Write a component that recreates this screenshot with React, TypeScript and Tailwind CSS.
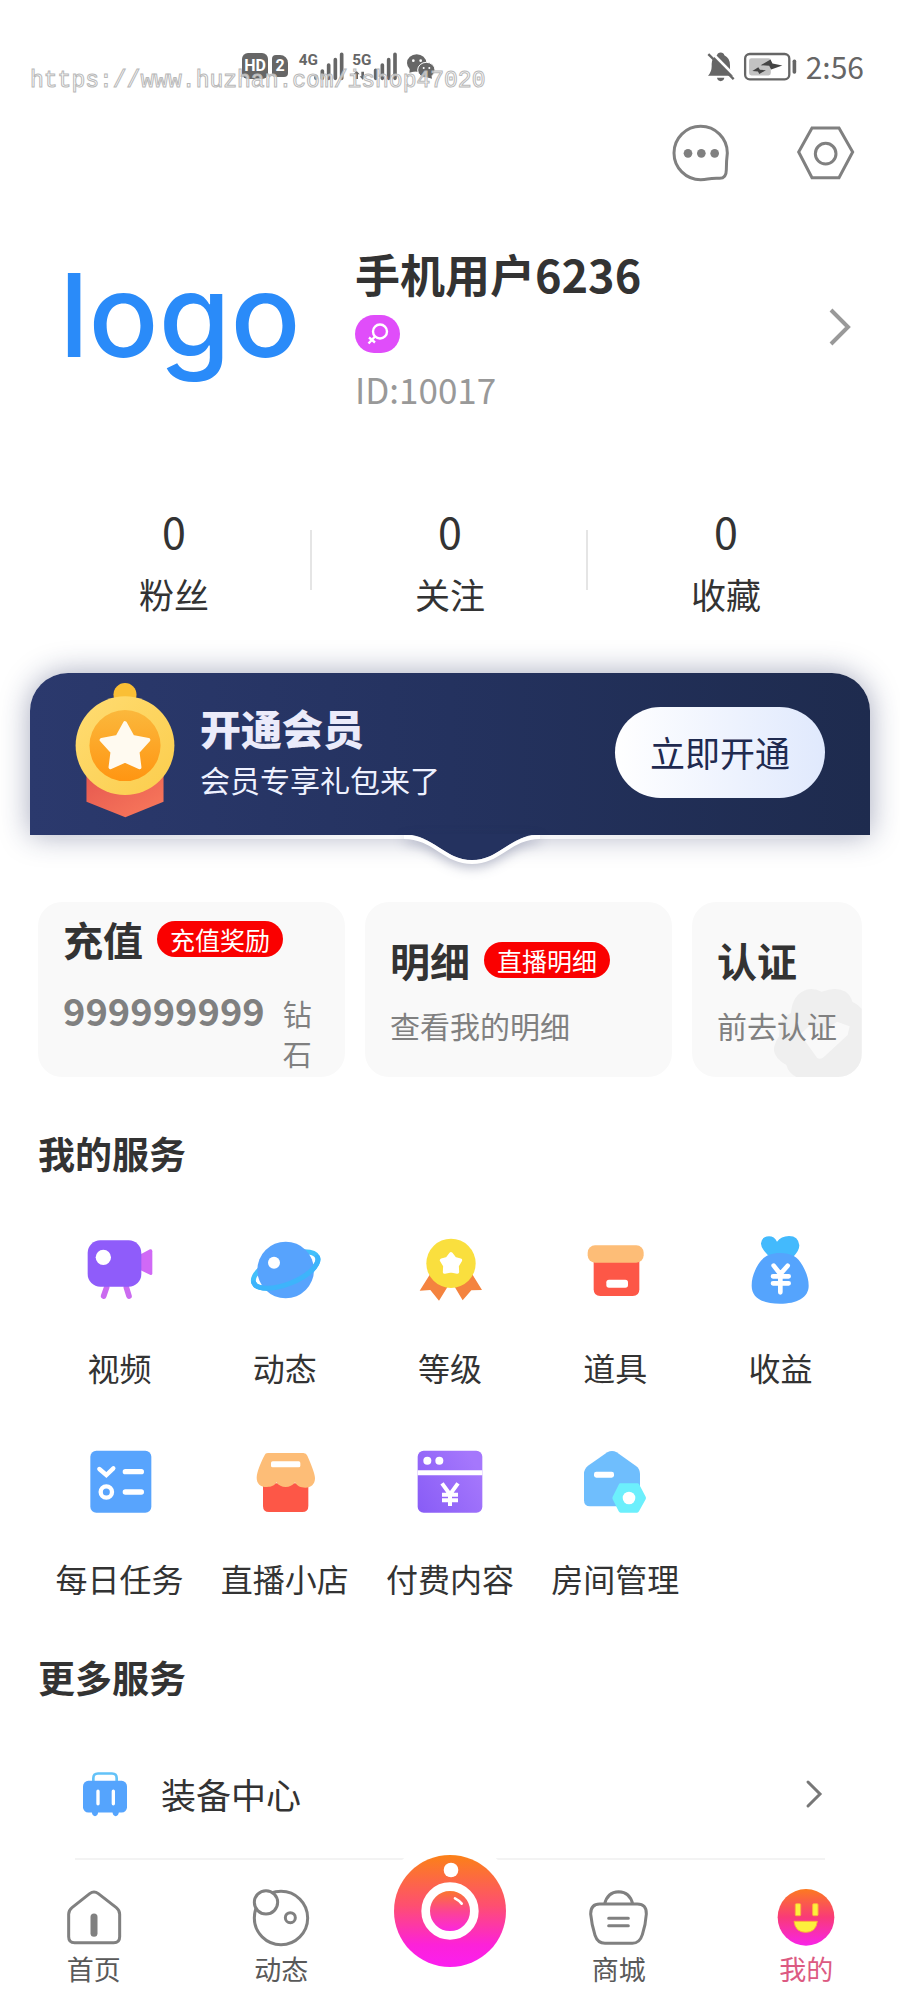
import type { ReactNode } from "react";

const services: { label: string; icon: ReactNode }[] = [
  { label: "视频", icon: <VideoIcon /> },
  { label: "动态", icon: <PlanetIcon /> },
  { label: "等级", icon: <LevelIcon /> },
  { label: "道具", icon: <PropsIcon /> },
  { label: "收益", icon: <IncomeIcon /> },
  { label: "每日任务", icon: <TaskIcon /> },
  { label: "直播小店", icon: <ShopIcon /> },
  { label: "付费内容", icon: <PaidIcon /> },
  { label: "房间管理", icon: <RoomIcon /> },
];

const stats = [
  { label: "粉丝", value: 0 },
  { label: "关注", value: 0 },
  { label: "收藏", value: 0 },
];

function VideoIcon() {
  return (
    <svg viewBox="90 90 240 240" className="size-20">
      <path d="M170 262l-9 26M229 262l8 26" stroke="#cb6bf0" strokeWidth="17" strokeLinecap="round" />
      <path d="M272 163l28-15q7-2 7 6v66q0 7-7 4l-28-13z" fill="#d069f6" />
      <rect x="113" y="121" width="161" height="139" rx="38" fill="#8f5cfa" />
      <circle cx="160" cy="172" r="23" fill="#fff" />
    </svg>
  );
}

function PlanetIcon() {
  return (
    <svg viewBox="585 90 240 240" className="size-20" fill="none">
      <ellipse cx="707" cy="210" rx="103" ry="42" stroke="#43c0fb" strokeWidth="15" transform="rotate(-22 707 210)" />
      <circle cx="707" cy="210" r="85" fill="#57a3fd" />
      <path
        d="M604 210a103 42 0 0 0 206 0"
        stroke="#3db4fb"
        strokeWidth="15"
        strokeLinecap="round"
        transform="rotate(-22 707 210)"
      />
      <circle cx="672" cy="188" r="18" fill="#fff" />
    </svg>
  );
}

function LevelIcon() {
  return (
    <svg viewBox="1080 90 240 240" className="size-20">
      <path d="M1142 220l-33 52 32-2 26 32 36-58zM1265 220l31 50-32 1-26 30-34-57z" fill="#f4833f" />
      <circle cx="1203" cy="190" r="74" fill="#fadf3e" />
      <path
        d="M1203 162l11 14 17 5-10 16 1 19-19-4-19 4 1-19-10-16 17-5z"
        fill="#fff"
        stroke="#fff"
        strokeWidth="11"
        strokeLinejoin="round"
      />
    </svg>
  );
}

function PropsIcon() {
  return (
    <svg viewBox="405 90 240 240" className="size-20">
      <path d="M461 180h137v88q0 20-20 20h-97q-20 0-20-20z" fill="#fd5747" />
      <rect x="443" y="136" width="168" height="52" rx="22" fill="#fdbd77" />
      <rect x="499" y="239" width="65" height="24" rx="8" fill="#fff" />
    </svg>
  );
}

function IncomeIcon() {
  return (
    <svg viewBox="900 90 240 240" className="size-20" fill="none">
      <path
        d="M984 166q-22-22-21-36 2-20 24-21 16 0 24 16 12-16 36-17 28 0 31 28 0 16-18 34z"
        fill="#43bafd"
      />
      <path
        d="M1020 159c34 0 54 12 68 38 12 22 18 40 18 60 0 36-36 54-86 54s-85-16-85-54c0-24 8-44 20-64 14-22 32-34 65-34z"
        fill="#55a4fd"
      />
      <path
        d="M1001 197l20 25 22-25M1021 222v55M999 229h47M999 250h47"
        stroke="#fff"
        strokeWidth="14"
        strokeLinecap="round"
      />
    </svg>
  );
}

function TaskIcon() {
  return (
    <svg viewBox="90 723 240 240" className="size-20" fill="none">
      <rect x="121" y="752" width="183" height="186" rx="18" fill="#58a4fd" />
      <path d="M148 807l21 18 21-20" stroke="#fff" strokeWidth="13" strokeLinecap="round" />
      <path d="M226 815h48M226 876h48" stroke="#fff" strokeWidth="16" strokeLinecap="round" />
      <circle cx="169" cy="876" r="17" stroke="#fff" strokeWidth="13" />
    </svg>
  );
}

function ShopIcon() {
  return (
    <svg viewBox="585 723 240 240" className="size-20">
      <path d="M639 850h136v68q0 18-18 18H657q-18 0-18-18z" fill="#fd5747" />
      <path
        d="M654 759h106q9 0 12 8 23 52 23 68c0 18-12 28-29 28-14 0-24-4-31-16-8 10-16 14-28 14s-20-4-28-14c-6 10-14 14-28 14-20 0-31-10-31-28 0-16 14-50 23-66 3-6 5-8 11-8z"
        fill="#fdbd77"
      />
      <rect x="663" y="784" width="88" height="18" rx="5" fill="#fff" />
    </svg>
  );
}

function PaidIcon() {
  return (
    <svg viewBox="1080 723 240 240" className="size-20" fill="none">
      <defs>
        <linearGradient id="paid" x1="0" y1="1" x2="1" y2="0.4">
          <stop offset="0" stopColor="#885cf6" />
          <stop offset="1" stopColor="#a577fc" />
        </linearGradient>
      </defs>
      <rect x="1103" y="752" width="194" height="186" rx="18" fill="url(#paid)" />
      <path d="M1103 818h194" stroke="#fff" strokeWidth="15" />
      <circle cx="1132" cy="782" r="12" fill="#fff" />
      <circle cx="1168" cy="782" r="12" fill="#fff" />
      <path d="M1176 850l24 33 24-33M1200 881v37M1176 884h48M1176 901h48" stroke="#fff" strokeWidth="12" />
    </svg>
  );
}

function RoomIcon() {
  return (
    <svg viewBox="405 723 240 240" className="size-20">
      <path
        d="M502 757q14-8 28 0l58 41q12 9 12 23v80q0 18-18 18H450q-18 0-18-18v-80q0-14 12-24z"
        fill="#6fbefd"
      />
      <rect x="462" y="815" width="60" height="18" rx="7" fill="#fff" />
      <path
        d="M541 850h51q4 0 6 4l19 36q2 4 0 8l-20 36q-2 4-6 4h-49q-4 0-6-4l-18-36q-2-4 0-8l18-36q2-4 5-4z"
        fill="#6ceffc"
      />
      <circle cx="567" cy="894" r="19" fill="#fff" />
    </svg>
  );
}

function Medal() {
  return (
    <svg viewBox="225 95 300 410" className="mb-1 h-[135px] w-[100px] shrink-0">
      <defs>
        <linearGradient id="ribbon" x1="0" y1="0" x2="1" y2="1">
          <stop offset="0" stopColor="#e5574f" />
          <stop offset="1" stopColor="#f97a5c" />
        </linearGradient>
        <linearGradient id="rim" x1="0" y1="0" x2="1" y2="1">
          <stop offset="0" stopColor="#ffdc72" />
          <stop offset="1" stopColor="#fbcd4c" />
        </linearGradient>
        <linearGradient id="core" x1="0" y1="0" x2="0" y2="1">
          <stop offset="0" stopColor="#fbb83c" />
          <stop offset="1" stopColor="#ff9512" />
        </linearGradient>
      </defs>
      <path d="M258 360h234v96l-116 47-118-47z" fill="url(#ribbon)" />
      <circle cx="375" cy="130" r="35" fill="#fabf35" />
      <circle cx="375" cy="285" r="150" fill="url(#rim)" />
      <circle cx="375" cy="285" r="108" fill="url(#core)" />
      <path
        d="M375 217l23 42 48 9-33 36 6 47-44-20-44 20 6-47-33-36 48-9z"
        fill="#fffaf0"
        stroke="#fffaf0"
        strokeWidth="12"
        strokeLinejoin="round"
      />
    </svg>
  );
}

function StatusBar() {
  return (
    <div className="relative flex h-[120px] items-center pt-3 pr-9 pl-[242px] text-[#666]">
      <span className="flex size-[26px] items-center justify-center rounded-md bg-[#666] font-['Roboto',sans-serif] text-base font-bold text-white">
        HD
      </span>
      <span className="ml-1 flex h-[22px] w-4 items-center justify-center rounded-sm rounded-tr-lg bg-[#666] font-['Roboto',sans-serif] text-base font-bold text-white">
        2
      </span>
      <svg viewBox="896 62 144 90" className="ml-[10px] h-[30px] w-12" fill="currentColor">
        <text x="898" y="104" fontFamily="Roboto, sans-serif" fontWeight="700" fontSize="46">
          4G
        </text>
        <path
          d="M950 139v5M969 122v22M988 104v40M1008 88v56M1027 72v72"
          stroke="currentColor"
          strokeWidth="11"
          strokeLinecap="round"
        />
      </svg>
      <svg viewBox="1060 62 144 90" className="ml-[6px] h-[30px] w-12" fill="currentColor">
        <text x="1061" y="104" fontFamily="Roboto, sans-serif" fontWeight="700" fontSize="46">
          5G
        </text>
        <path
          d="M1131 120v24M1151 104v40M1170 88v56M1189 72v72"
          stroke="currentColor"
          strokeWidth="11"
          strokeLinecap="round"
        />
        <path d="M1064 132l10-10 9 10h-5v14h-8v-14zM1102 138l-10 10-9-10h5v-14h8v14z" />
      </svg>
      <svg viewBox="1222 66 90 84" className="ml-[6px] h-7 w-[30px]" fill="currentColor">
        <path d="M1232 128l2-14 16 10z" />
        <ellipse cx="1254" cy="99" rx="29" ry="26" />
        <ellipse cx="1283" cy="120" rx="26" ry="23" stroke="#fff" strokeWidth="3" />
        <path d="M1300 146l-2-12-14 8z" />
        <g fill="#fff">
          <circle cx="1244" cy="92" r="4" />
          <circle cx="1266" cy="92" r="4" />
          <circle cx="1275" cy="114" r="3" />
          <circle cx="1292" cy="114" r="3" />
        </g>
      </svg>
      <svg viewBox="318 62 84 92" className="ml-auto h-[31px] w-7" fill="currentColor">
        <path d="M348 74q2-8 11-8t11 8q17 8 17 30v10q0 12 11 22H321q11-12 11-28v-8q0-18 16-26z" />
        <path d="M348 142h22q-2 10-11 10t-11-10z" />
        <path d="M331 65l74 75" stroke="#fff" strokeWidth="8" />
        <path d="M322 71l76 75" stroke="currentColor" strokeWidth="7" />
      </svg>
      <svg viewBox="428 64 164 88" className="ml-2 h-[29px] w-[55px]" fill="none">
        <rect x="433" y="70" width="134" height="77" rx="14" stroke="#666" strokeWidth="7" />
        <rect x="445" y="83" width="66" height="52" rx="7" fill="#c2c2c2" />
        <rect x="577" y="87" width="11" height="43" rx="5" fill="#666" />
        <path d="M480 104l30-17 6 12 30 6-34 12-6-11zM455 122l18-12 5 8 18 1-20 12-4-8z" fill="#444" />
      </svg>
      <time className="ml-2 text-[30px] leading-9">2:56</time>
      <span className="pointer-events-none absolute top-[67px] left-[30px] font-['Liberation_Mono',monospace] text-[23px] leading-7 text-white/70 [-webkit-text-stroke:1px_#b8b8b8]">
        https://www.huzhan.com/ishop47020
      </span>
    </div>
  );
}

function Profile() {
  return (
    <section className="flex items-center pt-[55px] pr-11 pl-[50px]">
      <div className="w-[305px] pr-[45px] pb-6 text-center font-['Inter',sans-serif] text-[116px] leading-[144px] font-medium text-[#2a8bf9]">
        logo
      </div>
      <div>
        <h1 className="text-[45px] leading-[62px] font-bold text-[#333]">手机用户6236</h1>
        <span className="mt-[10px] flex h-[38px] w-[45px] items-center justify-center rounded-full bg-[#e04dfa]">
          <svg viewBox="0 0 22 22" className="size-[22px]" fill="none" stroke="#fff" strokeWidth="2.4">
            <circle cx="13" cy="8.5" r="7" />
            <path d="M8 13.5l-6.500 7M2 14.500l6 5" strokeWidth="2.4" />
          </svg>
        </span>
        <p className="mt-[14px] text-[35px] leading-[44px] text-[#999]">ID:10017</p>
      </div>
      <button type="button" aria-label="个人资料" className="ml-auto p-1">
        <svg viewBox="0 0 24 40" className="h-10 w-6" fill="none" stroke="#999" strokeWidth="4">
          <path d="M3 3l17 17L3 37" />
        </svg>
      </button>
    </section>
  );
}

function Stats() {
  return (
    <section className="mt-[91px] flex items-center px-9">
      {stats.map((s, i) => (
        <div key={s.label} className="flex flex-1 items-center">
          {i > 0 && <span className="-ml-0.5 h-[60px] w-0.5 bg-[#e5e5e5]" />}
          <div className="flex-1 text-center text-[#333]">
            <p className="text-[43px] leading-14">{s.value}</p>
            <p className="mt-3 text-[35px] leading-12">{s.label}</p>
          </div>
        </div>
      ))}
    </section>
  );
}

function VipBanner() {
  return (
    <section className="relative mx-[30px] mt-[55px] flex h-[162px] items-center rounded-t-[38px] bg-linear-to-r from-[#2b396d] via-[#24325f] to-[#1e2b4e] pr-[45px] pb-1 pl-[45px] shadow-[0_0_30px_rgba(30,40,90,0.4)]">
      <Medal />
      <div className="ml-[25px]">
        <h2 className="text-[41px] leading-[50px] font-black text-[#ebebfa]">开通会员</h2>
        <p className="mt-1 text-[30px] leading-[46px] text-[#eef1ff]">会员专享礼包来了</p>
      </div>
      <button
        type="button"
        className="ml-auto h-[91px] w-[210px] rounded-full bg-linear-to-r from-white to-[#e0e9fd] text-[35px] text-[#1f2a50]"
      >
        立即开通
      </button>
      <span className="absolute inset-x-0 top-full h-1 bg-linear-to-r from-transparent via-white to-transparent" />
      <svg
        viewBox="0 0 136 32"
        className="absolute top-[161px] left-[54%] -ml-20 h-8 w-[136px] overflow-visible drop-shadow-[0_4px_6px_rgba(30,40,90,0.3)]"
      >
        <path d="M0 0C30 1 40 26 68 26S106 1 136 0z" fill="#24325f" />
        <path d="M0 3C30 3 40 28 68 28S106 3 136 3" fill="none" stroke="#fff" strokeWidth="4" />
      </svg>
    </section>
  );
}

function Badge({ children }: { children: ReactNode }) {
  return (
    <span className="ml-[14px] shrink-0 rounded-full bg-[#fa0000] px-[13px] text-[25px] leading-9 whitespace-nowrap text-white">
      {children}
    </span>
  );
}

function Cards() {
  return (
    <section className="mt-[67px] grid h-[175px] grid-cols-[307fr_307fr_170fr] gap-5 px-[38px]">
      <a href="#recharge" className="flex flex-col rounded-3xl bg-[#f9f9f9] pt-[10px] pl-[25px]">
        <div className="flex items-center">
          <h3 className="text-[40px] leading-[54px] font-bold text-[#333]">充值</h3>
          <Badge>充值奖励</Badge>
        </div>
        <div className="mt-6 flex items-baseline text-[#808080]">
          <span className="text-[38px] leading-10 font-bold">999999999</span>
          <span className="ml-[18px] w-[29px] text-[29px] leading-10 break-all">钻石</span>
        </div>
      </a>
      <a href="#detail" className="flex flex-col justify-center rounded-3xl bg-[#f9f9f9] pl-[25px]">
        <div className="flex items-center">
          <h3 className="text-[40px] leading-[54px] font-bold text-[#333]">明细</h3>
          <Badge>直播明细</Badge>
        </div>
        <p className="mt-4 text-[30px] leading-11 text-[#808080]">查看我的明细</p>
      </a>
      <a
        href="#verify"
        className="relative flex flex-col justify-center overflow-hidden rounded-3xl bg-[#f9f9f9] pl-[25px]"
      >
        <svg viewBox="1004 326 262 264" className="absolute right-0 bottom-0 size-[88px]">
          <path
            d="M1100 328q24-6 46 6 44-16 72 0 16 12 20 30 20 10 28 22v204h-196q-24-12-30-36-44-26-36-56 4-16 14-30-2-50 36-70 4-56 46-70z"
            fill="#efefef"
          />
          <path d="M1082 462l30-28 30 24 50-34 38 14-6 26-74 68q-10 6-18 0z" fill="#f9f9f9" />
        </svg>
        <h3 className="relative text-[40px] leading-[54px] font-bold text-[#333]">认证</h3>
        <p className="relative mt-4 text-[30px] leading-11 whitespace-nowrap text-[#808080]">前去认证</p>
      </a>
    </section>
  );
}

function TabBar() {
  return (
    <nav className="mt-auto flex items-start bg-white text-[27px] leading-9 text-[#595959]">
      <a href="#home" className="flex flex-1 flex-col items-center gap-[3px] pt-7 pb-[13px]">
        <svg viewBox="190 444 180 180" className="size-[60px]" fill="none" stroke="#808080" strokeWidth="9">
          <path d="M267 461q13-10 26 0l54 42q10 8 10 20v67q0 18-18 18H222q-18 0-18-18v-67q0-12 10-20z" />
          <path d="M280 531v49" strokeWidth="21" strokeLinecap="round" />
        </svg>
        首页
      </a>
      <a href="#moments" className="flex flex-1 flex-col items-center gap-[3px] pt-7 pb-[13px]">
        <svg viewBox="753 444 180 180" className="size-[60px]" fill="none" stroke="#808080" strokeWidth="9">
          <circle cx="843" cy="534" r="80" />
          <circle cx="798" cy="487" r="35" fill="#fff" />
          <circle cx="871" cy="533" r="15" />
        </svg>
        动态
      </a>
      <div className="flex w-[150px] justify-center">
        <button
          type="button"
          aria-label="直播"
          className="relative -mt-[19px] flex size-[140px] items-center justify-center rounded-full bg-white"
        >
          <svg viewBox="40 345 336 336" className="size-28" fill="none">
            <defs>
              <linearGradient id="live" x1="0" y1="0" x2="0" y2="1">
                <stop offset="0" stopColor="#fb8118" />
                <stop offset="0.45" stopColor="#fe4f70" />
                <stop offset="0.8" stopColor="#fc22d8" />
                <stop offset="1" stopColor="#fb1ef0" />
              </linearGradient>
              <linearGradient id="lens" x1="0" y1="0" x2="0" y2="1">
                <stop offset="0" stopColor="#fb8118" />
                <stop offset="0.5" stopColor="#fc4590" />
                <stop offset="1" stopColor="#fb20f0" />
              </linearGradient>
            </defs>
            <circle cx="208" cy="513" r="168" fill="url(#live)" />
            <circle cx="211" cy="390" r="22" fill="#fff" />
            <circle cx="208" cy="513" r="73" fill="url(#lens)" stroke="#fff" strokeWidth="26" />
            <path d="M223 475q12 6 20 16" stroke="#fff" strokeWidth="8" strokeLinecap="round" />
          </svg>
        </button>
      </div>
      <a href="#mall" className="flex flex-1 flex-col items-center gap-[3px] pt-7 pb-[13px]">
        <svg viewBox="628 444 180 180" className="size-[60px]" fill="none" stroke="#808080" strokeWidth="9">
          <path d="M675 492q8-36 42-37 34 1 42 37" />
          <path d="M660 492h113q28 0 27 30-2 32-12 62-8 26-30 26h-82q-22 0-30-24-10-32-13-64 0-30 27-30z" />
          <path d="M687 535h59M687 557h59" strokeLinecap="round" />
        </svg>
        商城
      </a>
      <a href="#mine" className="flex flex-1 flex-col items-center gap-[3px] pt-7 pb-[13px] text-[#dc5a82]">
        <svg viewBox="1188 444 180 180" className="size-[60px]">
          <defs>
            <linearGradient id="face" x1="0" y1="0" x2="0" y2="1">
              <stop offset="0" stopColor="#fc7a20" />
              <stop offset="0.5" stopColor="#f93a78" />
              <stop offset="1" stopColor="#f823e8" />
            </linearGradient>
          </defs>
          <circle cx="1278" cy="532" r="85" fill="url(#face)" />
          <g fill="#fdf03c" stroke="#fbb03a" strokeWidth="3">
            <rect x="1246" y="491" width="16" height="36" rx="3" />
            <rect x="1298" y="491" width="16" height="36" rx="3" />
            <path d="M1242 544h70q-4 33-35 33t-35-33z" />
          </g>
        </svg>
        我的
      </a>
    </nav>
  );
}

export default function App() {
  return (
    <div className="flex min-h-screen flex-col bg-white font-['Noto_Sans_CJK_SC',sans-serif] text-[#333]">
      <StatusBar />
      <div className="flex h-[68px] items-center justify-end gap-16 pr-[45px]">
        <button type="button" aria-label="消息">
          <svg viewBox="213 282 180 180" className="size-[60px]" fill="none">
            <path
              d="M302 289a80 80 0 0 1 80 80q-3 24-3 50 0 26-20 26-20-1-36 2-10 2-21 2a80 80 0 0 1 0-160z"
              stroke="#808080"
              strokeWidth="9"
            />
            <g fill="#808080">
              <circle cx="264" cy="370" r="13" />
              <circle cx="304" cy="370" r="13" />
              <circle cx="344" cy="370" r="13" />
            </g>
          </svg>
        </button>
        <button type="button" aria-label="设置">
          <svg viewBox="585 282 180 180" className="size-[60px]" fill="none" stroke="#808080" strokeWidth="9">
            <path d="M636 294h81l41 72-41 77h-81l-40-77z" />
            <circle cx="677" cy="371" r="31" />
          </svg>
        </button>
      </div>
      <Profile />
      <Stats />
      <VipBanner />
      <Cards />
      <h2 className="mt-[52px] px-[38px] text-[37px] leading-12 font-bold">我的服务</h2>
      <section className="mt-[53px] grid grid-cols-5 gap-y-[50px] px-[37px]">
        {services.map((s) => (
          <a key={s.label} href="#service" className="flex flex-col items-center">
            {s.icon}
            <span className="mt-[33px] text-[32px] leading-12 whitespace-nowrap">{s.label}</span>
          </a>
        ))}
      </section>
      <h2 className="mt-[51px] px-[38px] text-[37px] leading-12 font-bold">更多服务</h2>
      <a
        href="#equipment"
        className="mx-[75px] mt-[29px] flex h-[130px] items-center border-b-2 border-[#f3f3f3] pl-2"
      >
        <svg viewBox="249 96 132 134" className="h-[45px] w-11" fill="none">
          <path d="M280 124v-10q0-14 14-14h42q14 0 14 14v10" stroke="#63c2f8" strokeWidth="8" />
          <path d="M275 214h20q-2 14-10 14t-10-14zM337 214h20q-2 14-10 14t-10-14z" fill="#55a4fd" />
          <rect x="249" y="122" width="132" height="95" rx="16" fill="#55a4fd" />
          <path d="M294 153v38M340 153v38" stroke="#fff" strokeWidth="10" strokeLinecap="round" />
        </svg>
        <span className="ml-[34px] text-[35px] leading-12">装备中心</span>
        <svg viewBox="0 0 20 30" className="ml-auto h-[30px] w-5" fill="none" stroke="#777" strokeWidth="3">
          <path d="M3 3l12 12L3 27" strokeLinecap="round" />
        </svg>
      </a>
      <TabBar />
    </div>
  );
}
